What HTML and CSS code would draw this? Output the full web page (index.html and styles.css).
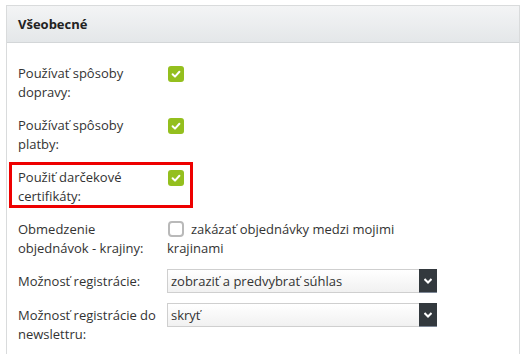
FILE: index.html
```html
<!DOCTYPE html>
<html lang="sk">
<head>
    <meta charset="UTF-8">
    <meta name="viewport" content="width=device-width, initial-scale=1.0">
    <title>Všeobecné</title>
    <link rel="stylesheet" href="styles.css">
</head>
<body>
    <div class="panel">
        <div class="panel-header">Všeobecné</div>

        <div class="panel-body">
            <div class="row">
                <div class="row-label">Používať spôsoby dopravy:</div>
                <div class="row-value">
                    <span class="check is-checked">
                        <svg width="16" height="16" viewBox="0 0 16 16"><path d="M4.6 8.3 L7 10.6 L11.4 5.8" fill="none" stroke="#fff" stroke-width="2" stroke-linecap="round" stroke-linejoin="round"/></svg>
                    </span>
                </div>
            </div>

            <div class="row">
                <div class="row-label">Používať spôsoby platby:</div>
                <div class="row-value">
                    <span class="check is-checked">
                        <svg width="16" height="16" viewBox="0 0 16 16"><path d="M4.6 8.3 L7 10.6 L11.4 5.8" fill="none" stroke="#fff" stroke-width="2" stroke-linecap="round" stroke-linejoin="round"/></svg>
                    </span>
                </div>
            </div>

            <!-- highlighted setting -->
            <div class="row row-marked">
                <span class="mark"></span>
                <div class="row-label">Použiť darčekové certifikáty:</div>
                <div class="row-value">
                    <span class="check is-checked">
                        <svg width="16" height="16" viewBox="0 0 16 16"><path d="M4.6 8.3 L7 10.6 L11.4 5.8" fill="none" stroke="#fff" stroke-width="2" stroke-linecap="round" stroke-linejoin="round"/></svg>
                    </span>
                </div>
            </div>

            <div class="row row-tight">
                <div class="row-label">Obmedzenie objednávok - krajiny:</div>
                <div class="row-value">
                    <label class="inline-check"><span class="check"></span>zakázať objednávky medzi mojimi krajinami</label>
                </div>
            </div>

            <div class="row row-select">
                <div class="row-label">Možnosť registrácie:</div>
                <div class="row-value">
                    <div class="select">
                        <select>
                            <option>zobraziť a predvybrať súhlas</option>
                        </select>
                        <span class="select-arrow">
                            <svg width="8" height="6" viewBox="0 0 8 6"><path d="M0.5 1 L4 4.5 L7.5 1" fill="none" stroke="#fff" stroke-width="2"/></svg>
                        </span>
                    </div>
                </div>
            </div>

            <div class="row row-select">
                <div class="row-label">Možnosť registrácie do newslettru:</div>
                <div class="row-value">
                    <div class="select">
                        <select>
                            <option>skryť</option>
                        </select>
                        <span class="select-arrow">
                            <svg width="8" height="6" viewBox="0 0 8 6"><path d="M0.5 1 L4 4.5 L7.5 1" fill="none" stroke="#fff" stroke-width="2"/></svg>
                        </span>
                    </div>
                </div>
            </div>
        </div>
    </div>
</body>
</html>
```

FILE: styles.css
```css
html, body {
    overflow: hidden;
}

body {
    margin: 0;
    font-family: "Open Sans", Arial, sans-serif;
    font-size: 13px;
    line-height: 19px;
    color: #333;
    background: #fff;
}

.panel {
    margin: 5px 5px 0 6px;
    border: 1px solid #d9dbdc;
    border-bottom: none;
}

.panel-header {
    height: 36px;
    line-height: 36px;
    padding-left: 11px;
    font-weight: bold;
    color: #222;
    background: linear-gradient(#f3f4f5, #e4e7e9);
    border-bottom: 1px solid #d3d6d8;
}

.panel-body {
    padding: 21px 11px 20px;
}

.row {
    display: flex;
    margin-bottom: 14px;
    position: relative;
}

.row-tight {
    margin-bottom: 11px;
}

.row-select {
    margin-bottom: 10px;
}

.row-label {
    width: 149px;
    flex-shrink: 0;
}

.row-select .row-label {
    padding-top: 3px;
}

.row-value {
    width: 270px;
}

.check {
    display: inline-block;
    box-sizing: border-box;
    width: 16px;
    height: 16px;
    margin: 2px 0 0 1px;
    border: 2px solid #b9b9b9;
    border-radius: 4px;
    background: #fff;
    vertical-align: top;
}

.check svg {
    display: block;
}

.check.is-checked {
    border: none;
    border-radius: 3px;
    background: #94bf1e;
}

.inline-check .check {
    margin: 1px 7px 0 1px;
}

.mark {
    position: absolute;
    left: -9px;
    top: -6px;
    width: 184px;
    height: 46px;
    box-sizing: border-box;
    border: 3px solid #ee0000;
}

.select {
    display: flex;
    width: 270px;
    height: 24px;
    box-sizing: border-box;
    border: 1px solid #cfcfcf;
    background: linear-gradient(#ffffff, #f1f1f1);
}

.select select {
    flex: 1;
    appearance: none;
    -webkit-appearance: none;
    border: none;
    background: transparent;
    font-family: inherit;
    font-size: 13px;
    color: #333;
    padding: 0 0 0 3px;
    margin: 0;
    height: 22px;
    outline: none;
}

.select-arrow {
    width: 18px;
    margin: -1px -1px -1px 0;
    background: #33393e;
    border-bottom: 1px solid #7d8796;
    display: flex;
    align-items: center;
    justify-content: center;
}

.select-arrow svg {
    display: block;
}
```
